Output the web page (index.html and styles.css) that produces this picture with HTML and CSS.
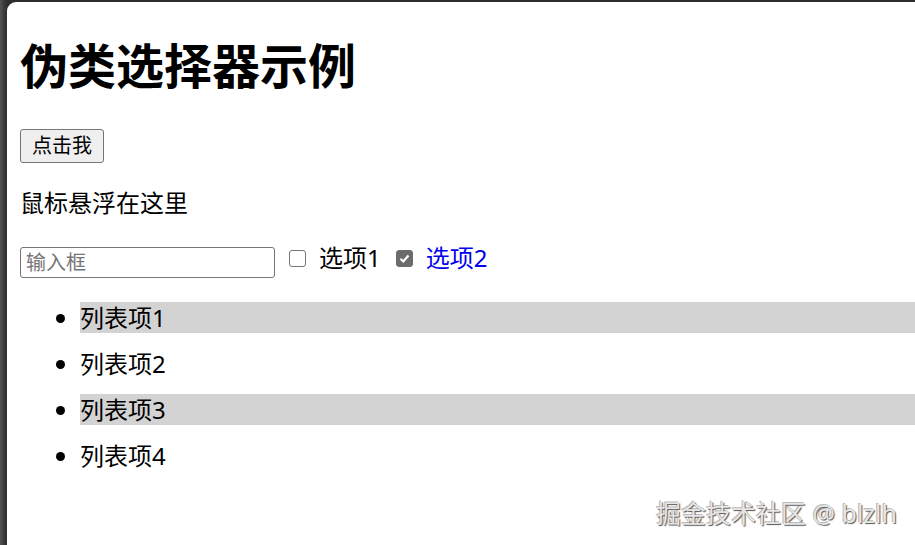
FILE: index.html
```html
<!DOCTYPE html>
<html lang="zh-CN">
<head>
    <meta charset="UTF-8">
    <meta name="viewport" content="width=device-width, initial-scale=1.0">
    <title>伪类选择器示例</title>
    <link rel="stylesheet" href="styles.css">
</head>
<body>
    <div class="page">
        <h1>伪类选择器示例</h1>

        <button class="btn">点击我</button>

        <p class="hover-text">鼠标悬浮在这里</p>

        <div class="form-row">
            <input type="text" class="text-input" placeholder="输入框">
            <input type="checkbox" id="opt1" class="check">
            <label for="opt1">选项1</label>
            <input type="checkbox" id="opt2" class="check" checked>
            <label for="opt2">选项2</label>
        </div>

        <ul class="list">
            <li>列表项1</li>
            <li>列表项2</li>
            <li>列表项3</li>
            <li>列表项4</li>
        </ul>

        <div class="watermark">掘金技术社区 @ blzlh</div>
    </div>
</body>
</html>
```

FILE: styles.css
```css
/* Khung ngoài */
html, body {
    height: 100%;
}

body {
    margin: 0;
    background: linear-gradient(90deg, #555 0px, #3a3a3a 4px, #2e2e2e 7px);
    font-family: "Noto Sans", "Noto Sans CJK SC", sans-serif;
    font-size: 24px;
    line-height: 1.32;
    color: #000;
    overflow: hidden;
}

.page {
    position: relative;
    box-sizing: border-box;
    margin: 2px 0 0 7px;
    height: calc(100% - 2px);
    padding: 1px 0 0 13px;
    background: #fff;
    border-top-left-radius: 9px;
}

h1 {
    font-size: 48px;
    font-weight: bold;
    line-height: 1.32;
    margin: 31px 0 31px;
}

/* Nút */
.btn {
    font-family: inherit;
    font-size: 20px;
    line-height: 29px;
    padding: 1px 11px 2px;
    background: #efefef;
    color: #000;
    border: 1px solid #767676;
    border-radius: 3px;
}

.hover-text {
    margin: 24px 0;
}

/* Hàng form */
.form-row {
    display: flex;
    align-items: center;
    height: 34px;
}

.text-input {
    box-sizing: border-box;
    width: 255px;
    height: 31px;
    margin: 4px 0 0;
    padding: 1px 5px;
    font-family: inherit;
    font-size: 20px;
    border: 1px solid #767676;
    border-radius: 3px;
}

.text-input::placeholder {
    color: #767676;
}

.check {
    appearance: none;
    -webkit-appearance: none;
    box-sizing: border-box;
    width: 17px;
    height: 17px;
    margin: 0 13px 4px 14px;
    border: 1.5px solid #767676;
    border-radius: 3px;
    background: #fff;
}

.check:checked {
    background: #6b6b6b center / 13px 13px no-repeat url("data:image/svg+xml,%3Csvg xmlns='http://www.w3.org/2000/svg' viewBox='0 0 13 13'%3E%3Cpath d='M2.5 6.8 L5.3 9.5 L10.5 3.6' fill='none' stroke='white' stroke-width='2.2'/%3E%3C/svg%3E");
    border-color: #6b6b6b;
}

.check + label {
    line-height: 1;
    margin-bottom: 5px;
}

.check:checked + label {
    color: #0000ee;
}

#opt2 {
    margin-left: 15px;
}

/* Danh sách */
.list {
    margin: 25px 0 24px;
    padding-left: 60px;
}

.list li {
    margin: 15px 0;
    line-height: 31px;
}

.list li:nth-child(odd) {
    background: #d3d3d3;
}

/* Watermark */
.watermark {
    position: absolute;
    right: 18px;
    bottom: 19px;
    font-size: 25px;
    line-height: 1;
    color: #e6e6e6;
    text-shadow: 1px 1px 1px #555, -1px -1px 0 #bbb;
}
```
